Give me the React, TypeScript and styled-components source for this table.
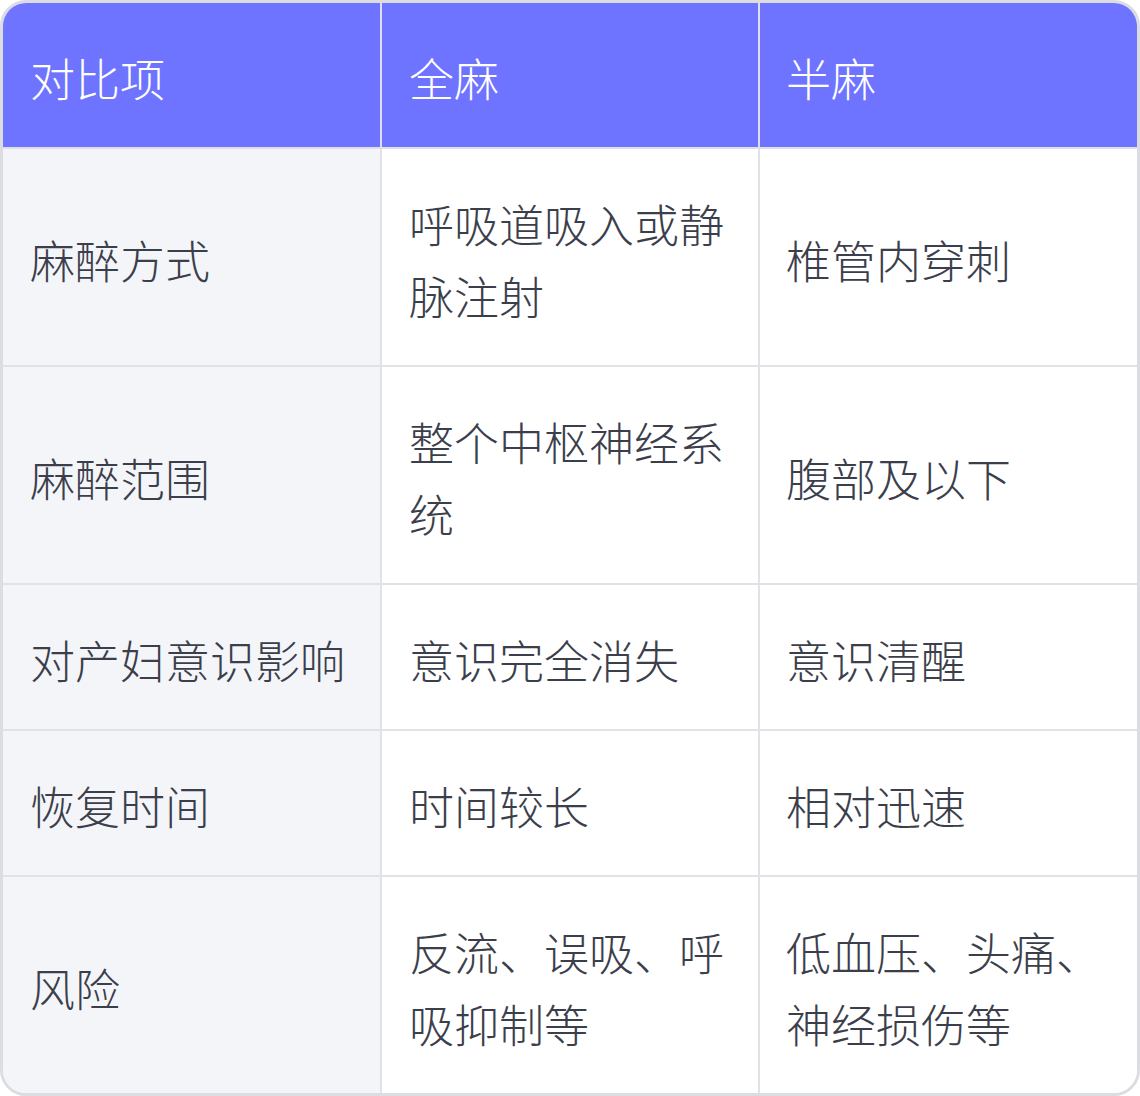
import React from 'react';
import styled, { createGlobalStyle } from 'styled-components';

const Global = createGlobalStyle`
  html, body {
    margin: 0;
    padding: 0;
    background: #ffffff;
  }
  body {
    font-family: "Noto Sans CJK SC", "Noto Sans", sans-serif;
  }
`;

const Frame = styled.div`
  width: 1140px;
  box-sizing: border-box;
  border: 3px solid #dcdde3;
  border-radius: 26px;
  overflow: hidden;
  background: #ffffff;
`;

const Table = styled.table`
  width: 100%;
  border-collapse: separate;
  border-spacing: 0;
  table-layout: fixed;
`;

const HeadCell = styled.th`
  background: #6e74ff;
  color: #ffffff;
  text-align: left;
  font-weight: 300;
  font-size: 45px;
  line-height: 72px;
  padding: 39px 27px 33px 27px;
  border-bottom: 2px solid #dfe0e6;
  border-right: 2px solid #dfe0e6;
  &:last-child {
    border-right: none;
    padding-left: 26px;
  }
`;

const Cell = styled.td<{ $label?: boolean; $last?: boolean }>`
  background: ${(p) => (p.$label ? '#f4f5f9' : '#ffffff')};
  color: #3b3e4b;
  font-weight: 300;
  font-size: 45px;
  line-height: 72px;
  padding: 39px 27px 33px 27px;
  vertical-align: middle;
  word-break: break-all;
  border-bottom: ${(p) => (p.$last ? 'none' : '2px solid #e1e2e7')};
  border-right: 2px solid #e1e2e7;
  &:last-child {
    border-right: none;
    padding-left: 26px;
  }
`;

const rows = [
  ['麻醉方式', '呼吸道吸入或静脉注射', '椎管内穿刺'],
  ['麻醉范围', '整个中枢神经系统', '腹部及以下'],
  ['对产妇意识影响', '意识完全消失', '意识清醒'],
  ['恢复时间', '时间较长', '相对迅速'],
  ['风险', '反流、误吸、呼吸抑制等', '低血压、头痛、神经损伤等'],
];

export default function App() {
  return (
    <>
      <Global />
      <Frame>
        <Table>
          <colgroup>
            <col style={{ width: 379 }} />
            <col style={{ width: 378 }} />
            <col style={{ width: 377 }} />
          </colgroup>
          <thead>
            <tr>
              <HeadCell>对比项</HeadCell>
              <HeadCell>全麻</HeadCell>
              <HeadCell>半麻</HeadCell>
            </tr>
          </thead>
          <tbody>
            {rows.map((r, i) => (
              <tr key={i}>
                {r.map((c, j) => (
                  <Cell key={j} $label={j === 0} $last={i === rows.length - 1}>
                    {c}
                  </Cell>
                ))}
              </tr>
            ))}
          </tbody>
        </Table>
      </Frame>
    </>
  );
}
